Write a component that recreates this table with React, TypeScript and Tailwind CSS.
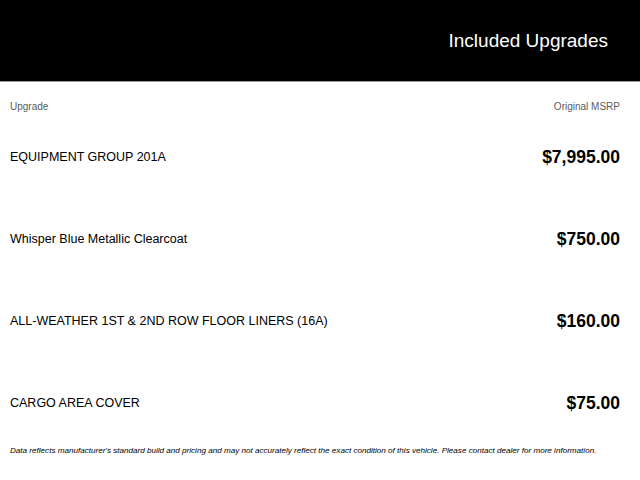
export default function App() {
  const rows = [
    { name: "EQUIPMENT GROUP 201A", price: "$7,995.00" },
    { name: "Whisper Blue Metallic Clearcoat", price: "$750.00" },
    { name: "ALL-WEATHER 1ST & 2ND ROW FLOOR LINERS (16A)", price: "$160.00" },
    { name: "CARGO AREA COVER", price: "$75.00" },
  ];
  return (
    <div className="w-[640px] h-[480px] bg-white overflow-hidden" style={{ fontFamily: '"Liberation Sans", Arial, sans-serif' }}>
      <div className="h-[82px] bg-black border-b border-[#9a9a9a] flex items-center justify-end pr-8">
        <h1 className="text-white text-[19px] leading-none">Included Upgrades</h1>
      </div>
      <div className="pl-[10px] pr-5">
        <div className="h-[34px] pt-[18px] flex justify-between text-[10px] leading-[14px] text-[#5a5a5a]">
          <span>Upgrade</span>
          <span>Original MSRP</span>
        </div>
        {rows.map((r) => (
          <div key={r.name} className="h-[82px] flex items-center justify-between">
            <span className="text-[12.5px] text-black">{r.name}</span>
            <span className="text-[17.5px] font-bold text-black">{r.price}</span>
          </div>
        ))}
        <p className="pt-[1px] text-[8.1px] leading-[12px] italic text-black whitespace-nowrap">
          Data reflects manufacturer's standard build and pricing and may not accurately reflect the exact condition of this vehicle. Please contact dealer for more information.
        </p>
      </div>
    </div>
  );
}
